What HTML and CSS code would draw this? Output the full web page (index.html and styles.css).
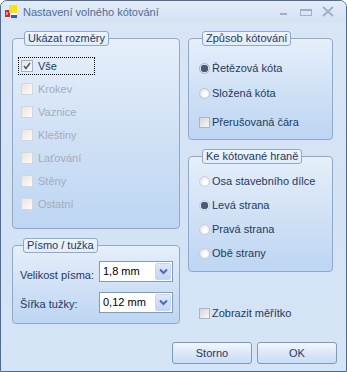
FILE: index.html
```html
<!DOCTYPE html>
<html lang="cs">
<head>
<meta charset="utf-8">
<title>Nastavení volného kótování</title>
<link rel="stylesheet" href="styles.css">
</head>
<body>
<div class="window">
  <div class="titlebar">
    <svg class="appicon" width="16" height="16" viewBox="0 0 16 16">
      <rect x="1" y="6" width="5" height="7" fill="#e0202a"/>
      <rect x="2" y="8" width="2" height="3" fill="#ff8a8a"/>
      <rect x="5" y="1" width="8" height="8" fill="#f4e21a"/>
      <rect x="7" y="9" width="6" height="5" fill="#ffffff"/>
      <rect x="7" y="11" width="6" height="3" fill="#2a58d8"/>
    </svg>
    <span class="title">Nastavení volného kótování</span>
    <div class="caption">
      <svg class="cap-min" width="10" height="10" viewBox="0 0 10 10"><rect x="1" y="6" width="7" height="2" fill="#9fb0c9"/></svg>
      <svg class="cap-max" width="12" height="10" viewBox="0 0 12 10"><rect x="0.5" y="2.5" width="11" height="6" fill="none" stroke="#9fb0c9"/><rect x="0" y="2" width="12" height="2" fill="#9fb0c9"/></svg>
      <svg class="cap-close" width="12" height="11" viewBox="0 0 12 11"><path d="M1 1 L11 10 M11 1 L1 10" stroke="#9fb0c9" stroke-width="2"/></svg>
    </div>
  </div>
  <div class="client">
    <div class="col">
      <fieldset class="group g-show">
        <legend>Ukázat rozměry</legend>
        <div class="item"><span class="focus"><span class="cb checked"><svg width="8" height="8" viewBox="0 0 8 8"><path d="M1 4 L3 6.5 L7 1" fill="none" stroke="#4a5a72" stroke-width="1.6"/></svg></span>Vše</span></div>
        <div class="item disabled"><span class="cb"></span>Krokev</div>
        <div class="item disabled"><span class="cb"></span>Vaznice</div>
        <div class="item disabled"><span class="cb"></span>Kleštiny</div>
        <div class="item disabled"><span class="cb"></span>Laťování</div>
        <div class="item disabled"><span class="cb"></span>Stěny</div>
        <div class="item disabled"><span class="cb"></span>Ostatní</div>
      </fieldset>
      <fieldset class="group g-font">
        <legend>Písmo / tužka</legend>
        <div class="field">
          <span class="lbl">Velikost písma:</span>
          <div class="combo"><span class="val">1,8 mm</span><span class="drop"><svg width="9" height="7" viewBox="0 0 9 7"><path d="M1 1.5 L4.5 5 L8 1.5" fill="none" stroke="#4d6fa6" stroke-width="2"/></svg></span></div>
        </div>
        <div class="field">
          <span class="lbl">Šířka tužky:</span>
          <div class="combo"><span class="val">0,12 mm</span><span class="drop"><svg width="9" height="7" viewBox="0 0 9 7"><path d="M1 1.5 L4.5 5 L8 1.5" fill="none" stroke="#4d6fa6" stroke-width="2"/></svg></span></div>
        </div>
      </fieldset>
    </div>
    <div class="col">
      <fieldset class="group g-mode">
        <legend>Způsob kótování</legend>
        <div class="ritem r1"><span class="rb on"></span>Řetězová kóta</div>
        <div class="ritem r2"><span class="rb"></span>Složená kóta</div>
        <div class="ritem r3"><span class="cb small"></span>Přerušovaná čára</div>
      </fieldset>
      <fieldset class="group g-edge">
        <legend>Ke kótované hraně</legend>
        <div class="ritem e"><span class="rb"></span>Osa stavebního dílce</div>
        <div class="ritem e"><span class="rb on"></span>Levá strana</div>
        <div class="ritem e"><span class="rb"></span>Pravá strana</div>
        <div class="ritem e"><span class="rb"></span>Obě strany</div>
      </fieldset>
      <div class="ritem scale"><span class="cb small"></span>Zobrazit měřítko</div>
    </div>
  </div>
  <div class="buttons">
    <button class="btn">Storno</button>
    <button class="btn">OK</button>
  </div>
</div>
</body>
</html>
```

FILE: styles.css
```css
* { box-sizing: border-box; }
html, body { margin: 0; padding: 0; background: #ffffff; }
body {
  font-family: "Liberation Sans", Arial, sans-serif;
  font-size: 11px;
  color: #1e3a62;
}
.window {
  width: 347px;
  height: 372px;
  border: 1px solid #4f6b8f;
  border-radius: 7px 7px 0 0;
  background: linear-gradient(#d9e6f5, #d3e2f4 60%, #d6e5f6);
  overflow: hidden;
}
.titlebar {
  height: 21px;
  display: flex;
  align-items: center;
  padding-left: 3px;
  background: linear-gradient(#e3ecf8, #d4e2f3);
}
.appicon { flex: none; }
.title {
  margin-left: 3px;
  color: #4f6c98;
  font-size: 11px;
  padding-top: 1px;
}
.caption {
  margin-left: auto;
  display: flex;
  align-items: center;
  padding-right: 12px;
}
.cap-min { margin-right: 11px; }
.cap-max { margin-right: 10px; }
.client {
  display: grid;
  grid-template-columns: 168px 145px;
  column-gap: 8px;
  padding: 9px 0 0 11px;
}
.col { display: flex; flex-direction: column; }
.group {
  margin: 0;
  padding: 0;
  min-width: 0;
  border: 1px solid #8fa9cb;
  border-radius: 4px;
  background: linear-gradient(#e6effa, #cfe0f5 55%, #bdd6f3);
}
.group legend {
  margin-left: 3px;
  padding: 0 3px;
  height: 15px;
  line-height: 13px;
  border: 1px solid #8fa9cb;
  border-radius: 3px;
  background: linear-gradient(#eef4fc, #e2ecf8);
  color: #1e3a62;
}
.g-show { padding: 8px 0 13px 8px; }
.item {
  height: 23px;
  display: flex;
  align-items: center;
}
.item.disabled { color: #a2acbd; }
.focus {
  display: flex;
  align-items: center;
  width: 77px;
  height: 18px;
  margin-left: -3px;
  padding-left: 2px;
  border: 1px dotted #000000;
}
.cb {
  flex: none;
  width: 12px;
  height: 12px;
  margin-right: 5px;
  border: 1px solid #c3cddb;
  background: linear-gradient(135deg, #e6e3de, #fbfbf9);
  display: flex;
  align-items: center;
  justify-content: center;
}
.item.disabled .cb {
  border-color: #d2d6de;
  background: linear-gradient(135deg, #ece4dc, #fdfbf9);
}
.cb.checked { border-color: #a3b1c6; }
.cb.small {
  width: 11px;
  height: 11px;
  margin-right: 2px;
  border-color: #a8b6ca;
  background: linear-gradient(135deg, #d8d6d2, #f7f7f5);
}
.g-font { margin-top: 9px; padding: 8px 0 10px 7px; }
.field {
  display: flex;
  align-items: flex-start;
  height: 21px;
}
.field + .field { margin-top: 10px; }
.lbl {
  width: 79px;
  padding-top: 8px;
  font-size: 11px;
}
.field + .field .lbl { padding-top: 6px; }
.combo {
  width: 74px;
  height: 21px;
  border: 1px solid #7f9db9;
  background: #ffffff;
  display: flex;
  align-items: center;
  padding: 1px;
}
.val {
  flex: 1;
  padding-left: 2px;
  color: #000000;
  font-size: 11px;
  padding-bottom: 2px;
}
.drop {
  width: 16px;
  height: 17px;
  border-radius: 2px;
  background: linear-gradient(#dfe8fb, #c3d4f6);
  border: 1px solid #c8d6f2;
  display: flex;
  align-items: center;
  justify-content: center;
}
.g-mode { padding: 12px 0 7px 10px; }
.ritem {
  height: 20px;
  display: flex;
  align-items: center;
}
.r2 { margin-top: 5px; }
.r3 { margin-top: 9px; }
.rb {
  flex: none;
  width: 11px;
  height: 11px;
  border-radius: 50%;
  margin-right: 2px;
  border: 1px solid #b9c4d3;
  background: radial-gradient(circle at 60% 60%, #ffffff 20%, #dcdfe4 90%);
  display: flex;
  align-items: center;
  justify-content: center;
}
.rb.on {
  border-color: #a6b2c4;
  background: radial-gradient(circle, #4a5a78 0 3.5px, #dfe3ea 4px);
}
.g-edge { margin-top: 9px; padding: 5px 0 6px 10px; }
.ritem.e { height: 24px; }
.g-edge .rb { border-color: #c6cfdb; }
.scale { margin-top: 31px; padding-left: 11px; }
.buttons {
  display: flex;
  justify-content: flex-end;
  gap: 5px;
  padding-right: 9px;
  margin-top: 18px;
}
.btn {
  width: 80px;
  height: 22px;
  font-family: "Liberation Sans", Arial, sans-serif;
  font-size: 11px;
  color: #1e3a62;
  border: 1px solid #7c99c0;
  border-radius: 3px;
  background: linear-gradient(#f2f7fd, #dbe8f8 50%, #c9dcf4);
  padding: 0;
}
```
